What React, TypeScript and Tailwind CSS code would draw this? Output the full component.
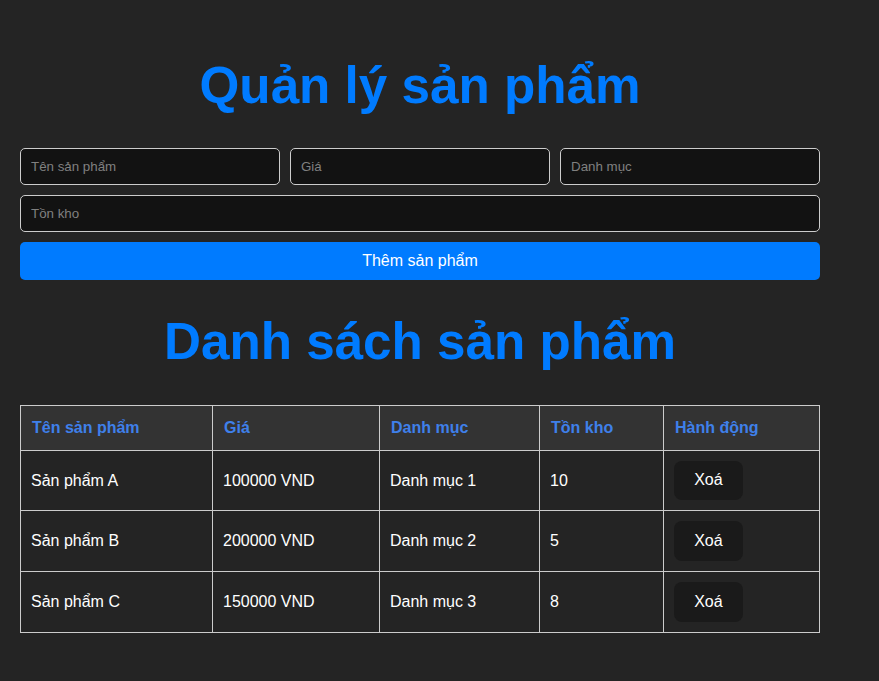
import React, { useState } from "react";

interface Product {
  id: number;
  name: string;
  price: number;
  category: string;
  stock: number;
}

const initialProducts: Product[] = [
  { id: 1, name: "Sản phẩm A", price: 100000, category: "Danh mục 1", stock: 10 },
  { id: 2, name: "Sản phẩm B", price: 200000, category: "Danh mục 2", stock: 5 },
  { id: 3, name: "Sản phẩm C", price: 150000, category: "Danh mục 3", stock: 8 },
];

const inputClass =
  "h-[37px] w-full rounded-[5px] border border-[#ccc] bg-[#121212] px-[10px] text-[13.33px] text-white placeholder:text-[#808080] outline-none";

const App = () => {
  const [products, setProducts] = useState<Product[]>(initialProducts);
  const [name, setName] = useState("");
  const [price, setPrice] = useState("");
  const [category, setCategory] = useState("");
  const [stock, setStock] = useState("");

  const addProduct = () => {
    if (!name) return;
    setProducts([
      ...products,
      {
        id: Date.now(),
        name,
        price: Number(price),
        category,
        stock: Number(stock),
      },
    ]);
    setName("");
    setPrice("");
    setCategory("");
    setStock("");
  };

  const removeProduct = (id: number) => {
    setProducts(products.filter((p) => p.id !== id));
  };

  return (
    <div className="min-h-screen bg-[#242424] font-['Liberation_Sans',Arial,sans-serif] text-[16px] leading-[1.5] text-[rgba(255,255,255,0.87)]">
      <div className="w-[800px] px-0 ml-[20px] pt-[24px]">
        <h1 className="mt-[34.3px] mb-[33.3px] text-center text-[51.2px] font-bold leading-[1.1] text-[#007bff]">
          Quản lý sản phẩm
        </h1>

        <div className="flex flex-col gap-[10px]">
          <div className="grid grid-cols-3 gap-[10px]">
            <input
              className={inputClass}
              placeholder="Tên sản phẩm"
              value={name}
              onChange={(e) => setName(e.target.value)}
            />
            <input
              className={inputClass}
              placeholder="Giá"
              value={price}
              onChange={(e) => setPrice(e.target.value)}
            />
            <input
              className={inputClass}
              placeholder="Danh mục"
              value={category}
              onChange={(e) => setCategory(e.target.value)}
            />
          </div>
          <input
            className={inputClass}
            placeholder="Tồn kho"
            value={stock}
            onChange={(e) => setStock(e.target.value)}
          />
          <button
            onClick={addProduct}
            className="h-[38px] w-full rounded-[5px] bg-[#007bff] text-[16px] leading-[18px] text-white"
          >
            Thêm sản phẩm
          </button>
        </div>

        <h2 className="my-[34.3px] text-center text-[51.2px] font-bold leading-[1.1] text-[#007bff]">
          Danh sách sản phẩm
        </h2>

        <table className="w-[800px] border-collapse border border-[#ccc] text-left">
          <thead>
            <tr className="bg-[#333]">
              <th className="w-[192px] border border-[#ccc] py-[10px] pl-[11px] pr-[10px] font-bold text-[#3f80ea]">Tên sản phẩm</th>
              <th className="w-[167px] border border-[#ccc] py-[10px] pl-[11px] pr-[10px] font-bold text-[#3f80ea]">Giá</th>
              <th className="w-[160px] border border-[#ccc] py-[10px] pl-[11px] pr-[10px] font-bold text-[#3f80ea]">Danh mục</th>
              <th className="w-[124px] border border-[#ccc] py-[10px] pl-[11px] pr-[10px] font-bold text-[#3f80ea]">Tồn kho</th>
              <th className="border border-[#ccc] py-[10px] pl-[11px] pr-[10px] font-bold text-[#3f80ea]">Hành động</th>
            </tr>
          </thead>
          <tbody>
            {products.map((p) => (
              <tr key={p.id}>
                <td className="border border-[#ccc] p-[10px] text-white">{p.name}</td>
                <td className="border border-[#ccc] p-[10px] text-white">{p.price} VND</td>
                <td className="border border-[#ccc] p-[10px] text-white">{p.category}</td>
                <td className="border border-[#ccc] p-[10px] text-white">{p.stock}</td>
                <td className="border border-[#ccc] p-[10px]">
                  <button
                    onClick={() => removeProduct(p.id)}
                    className="rounded-[8px] border border-transparent bg-[#1a1a1a] px-[19.2px] py-[9.6px] text-[16px] leading-[18.4px] text-white"
                  >
                    Xoá
                  </button>
                </td>
              </tr>
            ))}
          </tbody>
        </table>
      </div>
    </div>
  );
};

export default App;
